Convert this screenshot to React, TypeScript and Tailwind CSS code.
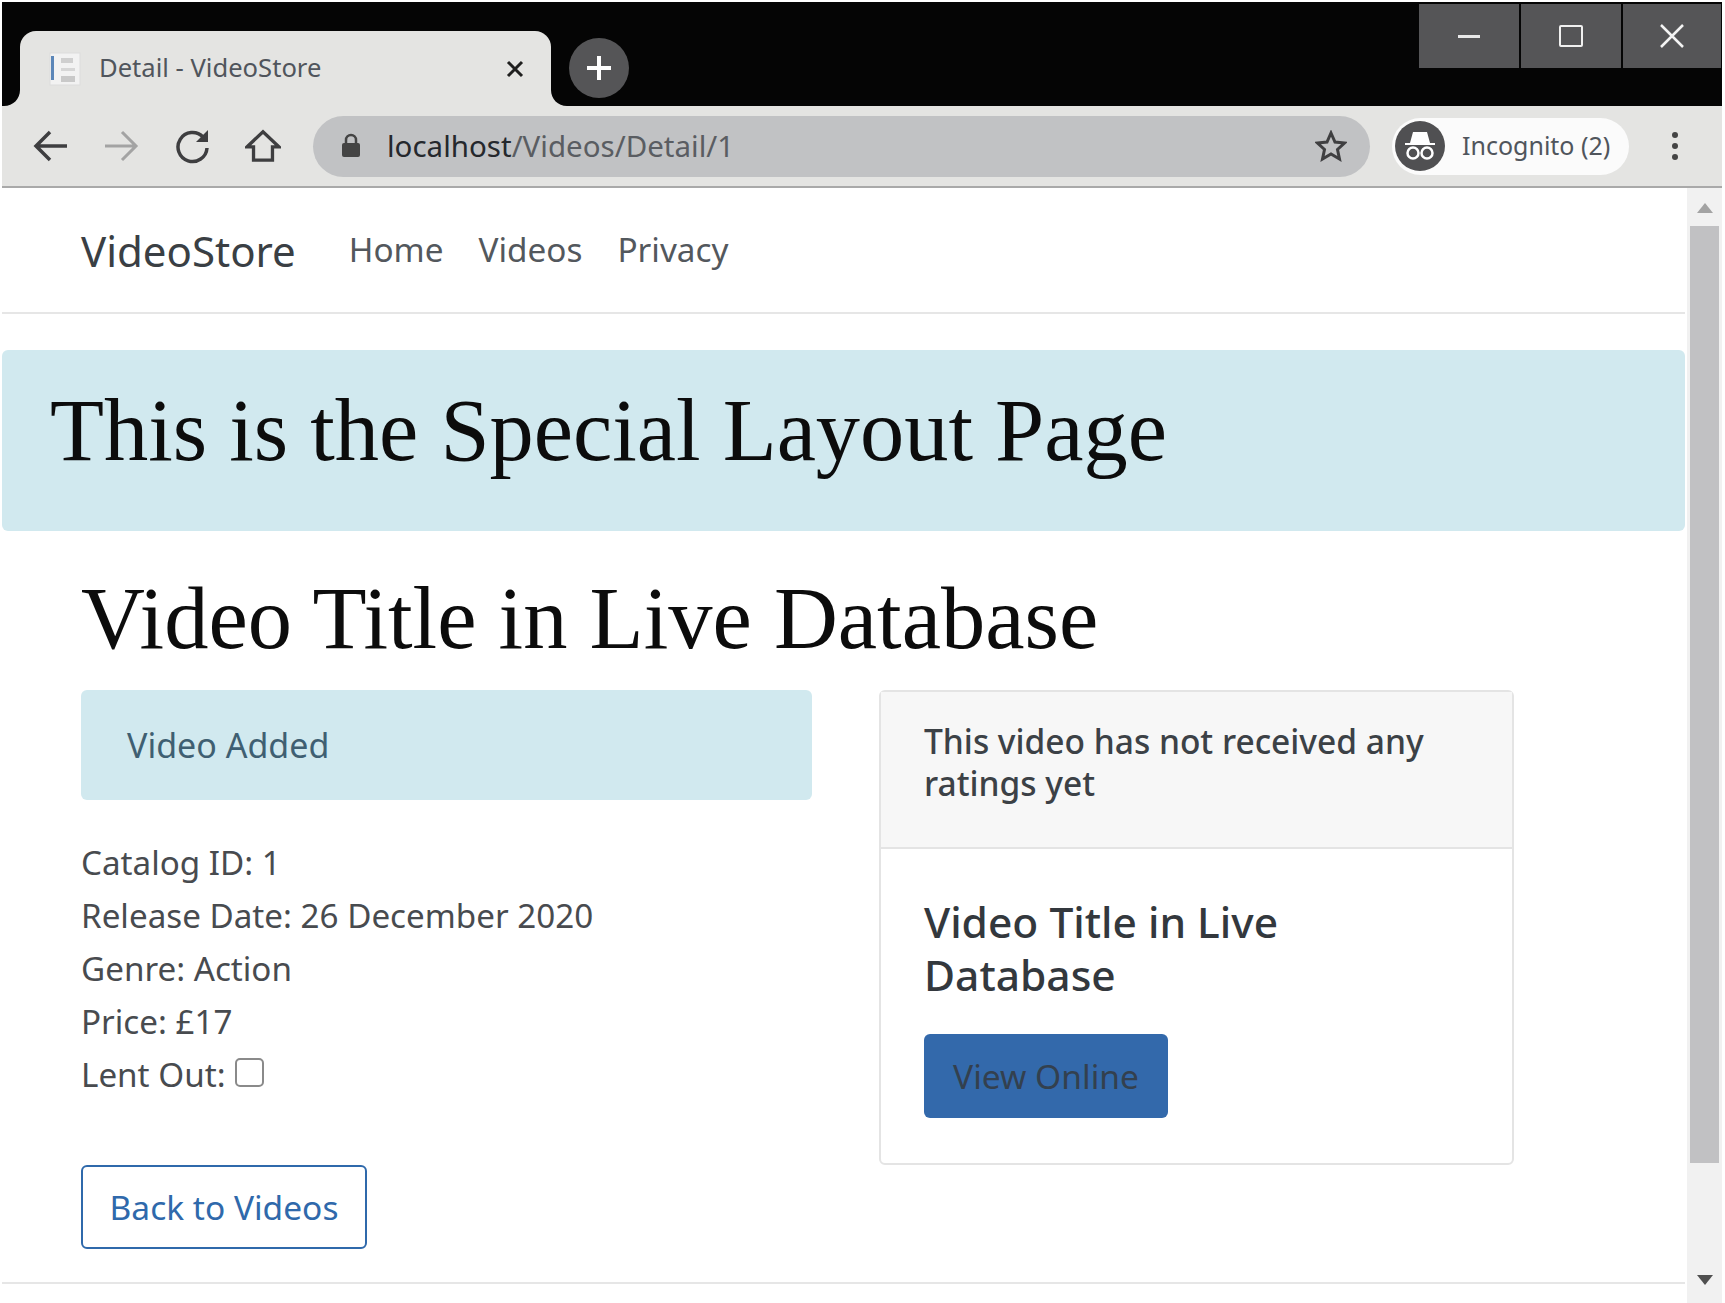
const sans = "font-['Noto_Sans','Open_Sans',sans-serif]";

function TabCorner({ flip }: { flip?: boolean }) {
  return (
    <svg width="16" height="16" viewBox="0 0 16 16" className={flip ? "-scale-x-100" : ""}>
      <path d="M16 0V16H0C9 16 16 9 16 0Z" fill="#e4e4e2" />
    </svg>
  );
}

function TitleBar() {
  return (
    <div className="flex h-[104px] items-start bg-[#050505]">
      <div className="flex h-full items-end pl-[2px]">
        <TabCorner />
        <div className="flex h-[75px] w-[531px] items-center rounded-t-[16px] bg-[#e4e4e2] pl-[27px] pr-[26px]">
          <svg width="36" height="38" viewBox="0 0 36 38">
            <rect x="3" y="3" width="30" height="32" fill="#f2f2f2" stroke="#dcdcdc" />
            <rect x="4" y="6" width="3" height="24" fill="#5b86b8" />
            <rect x="14" y="8" width="12" height="5" fill="#cfcfcf" />
            <rect x="14" y="18" width="14" height="3" fill="#d6d6d6" />
            <rect x="14" y="26" width="14" height="6" fill="#c9c9c9" />
          </svg>
          <span className={`ml-[16px] text-[25.6px] text-[#50555c] ${sans}`}>Detail - VideoStore</span>
          <svg width="20" height="20" viewBox="0 0 20 20" className="ml-auto">
            <path d="M3 3L17 17M17 3L3 17" stroke="#1f1f1f" strokeWidth="3" />
          </svg>
        </div>
        <TabCorner flip />
      </div>
      <div className="ml-[2px] mt-[36px] flex h-[60px] w-[60px] items-center justify-center rounded-full bg-[#555557]">
        <svg width="28" height="28" viewBox="0 0 28 28">
          <path d="M14 2V26M2 14H26" stroke="#fff" strokeWidth="4" />
        </svg>
      </div>
      <div className="ml-auto mr-[1px] mt-[2px] flex gap-[2px]">
        <div className="flex h-[64px] w-[100px] items-center justify-center bg-[#555557]">
          <div className="h-[3px] w-[22px] bg-[#e8e8e8]" />
        </div>
        <div className="flex h-[64px] w-[100px] items-center justify-center bg-[#555557]">
          <div className="h-[22px] w-[24px] rounded-[2px] border-[2px] border-[#f0f0f0]" />
        </div>
        <div className="flex h-[64px] w-[98px] items-center justify-center bg-[#555557]">
          <svg width="26" height="26" viewBox="0 0 26 26">
            <path d="M2 2L24 24M24 2L2 24" stroke="#f4f4f4" strokeWidth="2.5" />
          </svg>
        </div>
      </div>
    </div>
  );
}

function Toolbar() {
  return (
    <div className="flex h-[82px] items-center border-b-[2px] border-[#a9a9a9] bg-[#e4e4e2] pl-[31px]">
      <svg width="36" height="34" viewBox="0 0 36 34" fill="none" stroke="#3e3e40" strokeWidth="3.5">
        <path d="M34 17H4M17 3L3 17L17 31" />
      </svg>
      <svg width="36" height="34" viewBox="0 0 36 34" fill="none" stroke="#a3a3a3" strokeWidth="3" className="ml-[34px]">
        <path d="M2 17H32M19 3L33 17L19 31" />
      </svg>
      <svg width="36" height="36" viewBox="0 0 36 36" fill="none" className="ml-[36px]">
        <path d="M28 9A14.5 14.5 0 1 0 32 20" stroke="#3e3e40" strokeWidth="3.5" />
        <path d="M33 2V14H21Z" fill="#3e3e40" />
      </svg>
      <svg width="36" height="36" viewBox="0 0 38 36" fill="none" stroke="#3e3e40" strokeWidth="3.5" className="ml-[34px]">
        <path d="M2 19L19 3L36 19H29V33H9V19Z" />
      </svg>
      <div className="ml-[32px] flex h-[61px] w-[1057px] items-center rounded-full bg-[#c1c2c4] pl-[28px] pr-[23px]">
        <svg width="20" height="26" viewBox="0 0 20 26">
          <path d="M5 11V7A5 5 0 0 1 15 7V11" fill="none" stroke="#444" strokeWidth="2.5" />
          <rect x="1" y="10" width="18" height="14" rx="2" fill="#444" />
        </svg>
        <span className={`ml-[26px] text-[29.5px] text-[#5a5d62] ${sans}`}>
          <span className="text-[#25282d]">localhost</span>/Videos/Detail/1
        </span>
        <svg width="32" height="32" viewBox="0 0 32 32" className="ml-auto" fill="none" stroke="#3f3f41" strokeWidth="3">
          <path d="M16 3L20 12L29.5 13L22.5 19.5L24.5 29L16 24L7.5 29L9.5 19.5L2.5 13L12 12Z" />
        </svg>
      </div>
      <div className="ml-[22px] flex h-[57px] w-[237px] items-center rounded-full bg-[#fbfbfb] pl-[3px]">
        <div className="flex h-[50px] w-[50px] items-center justify-center rounded-full bg-[#505052]">
          <svg width="34" height="34" viewBox="0 0 34 34" fill="none">
            <path d="M10 3H24L27 14H7Z" fill="#fff" />
            <path d="M2 15H32" stroke="#fff" strokeWidth="2" />
            <circle cx="10" cy="24" r="5.5" stroke="#fff" strokeWidth="2.5" />
            <circle cx="24" cy="24" r="5.5" stroke="#fff" strokeWidth="2.5" />
          </svg>
        </div>
        <span className={`ml-[17px] text-[25px] text-[#50555c] ${sans}`}>Incognito (2)</span>
      </div>
      <div className="ml-[43px] flex flex-col gap-[5px]">
        <div className="h-[6px] w-[6px] rounded-full bg-[#444]" />
        <div className="h-[6px] w-[6px] rounded-full bg-[#444]" />
        <div className="h-[6px] w-[6px] rounded-full bg-[#444]" />
      </div>
    </div>
  );
}

function Scrollbar() {
  return (
    <div className="flex w-[35px] shrink-0 flex-col items-center bg-[#f1f1f1]">
      <svg width="16" height="10" viewBox="0 0 16 10" className="mt-[15px]">
        <path d="M8 0L16 10H0Z" fill="#a3a3a3" />
      </svg>
      <div className="mt-[13px] h-[937px] w-[29px] bg-[#c1c1c3]" />
      <svg width="16" height="10" viewBox="0 0 16 10" className="mt-[112px]">
        <path d="M0 0H16L8 10Z" fill="#505050" />
      </svg>
    </div>
  );
}

function Nav() {
  return (
    <div className="flex h-[126px] items-center border-b-[2px] border-[#e6e6e6] pl-[79px]">
      <span className="text-[42px] text-[#3a3f44]">VideoStore</span>
      <div className="ml-[53px] flex gap-[35px] text-[33.3px] text-[#53585d]">
        <span>Home</span>
        <span>Videos</span>
        <span>Privacy</span>
      </div>
    </div>
  );
}

function Details() {
  return (
    <div className="mt-[36px] flex flex-col text-[33.2px] leading-[53px] text-[#484b4f]">
      <span>Catalog ID: 1</span>
      <span>Release Date: 26 December 2020</span>
      <span>Genre: Action</span>
      <span>Price: £17</span>
      <span className="flex items-center">
        Lent Out:
        <span className="mb-[4px] ml-[9px] h-[29px] w-[29px] rounded-[5px] border-[2px] border-[#8a8a8a]" />
      </span>
    </div>
  );
}

function RatingCard() {
  return (
    <div className="ml-[67px] h-[475px] w-[635px] rounded-[6px] border-[2px] border-[#e4e4e4]">
      <div className="h-[157px] border-b-[2px] border-[#e4e4e4] bg-[#f7f7f7] px-[43px] pt-[28px] text-[33.5px] font-medium leading-[42px] text-[#3c4146]">
        This video has not received any ratings yet
      </div>
      <div className="px-[43px] pt-[46px]">
        <div className="w-[450px] text-[42.5px] font-medium leading-[53px] text-[#33383d]">Video Title in Live Database</div>
        <div className="mt-[33px] flex h-[84px] w-[244px] items-center justify-center rounded-[6px] bg-[#3369ab] text-[33.5px] text-[#33404e]">
          View Online
        </div>
      </div>
    </div>
  );
}

export default function App() {
  return (
    <div className={`flex h-[1303px] w-[1725px] flex-col overflow-hidden bg-white pt-[2px] pr-[3px] pl-[2px] ${sans}`}>
      <TitleBar />
      <Toolbar />
      <div className="flex min-h-0 flex-1">
        <div className="min-w-0 flex-1 pr-[2px]">
          <Nav />
          <div className="mt-[36px] flex h-[181px] items-center rounded-[6px] bg-[#d1e9ef] pl-[48px] pb-[20px] font-['Liberation_Serif',serif] text-[88.4px] text-[#0c0c0c]">
            This is the Special Layout Page
          </div>
          <div className="pl-[79px]">
            <h1 className="mt-[37px] font-['Liberation_Serif',serif] text-[88.5px] leading-[100px] text-[#0c0c0c]">
              Video Title in Live Database
            </h1>
            <div className="mt-[22px] flex items-start">
              <div className="w-[731px] shrink-0">
                <div className="flex h-[110px] items-center rounded-[6px] bg-[#d1e9ef] pl-[46px] text-[34px] text-[#3f5f72]">
                  Video Added
                </div>
                <Details />
                <div className="mt-[64px] flex h-[84px] w-[286px] items-center justify-center rounded-[6px] border-[2px] border-[#2f69ab] text-[33.5px] text-[#2f69ab]">
                  Back to Videos
                </div>
              </div>
              <RatingCard />
            </div>
          </div>
          <div className="mt-[33px] h-[2px] bg-[#e6e6e6]" />
        </div>
        <Scrollbar />
      </div>
    </div>
  );
}
